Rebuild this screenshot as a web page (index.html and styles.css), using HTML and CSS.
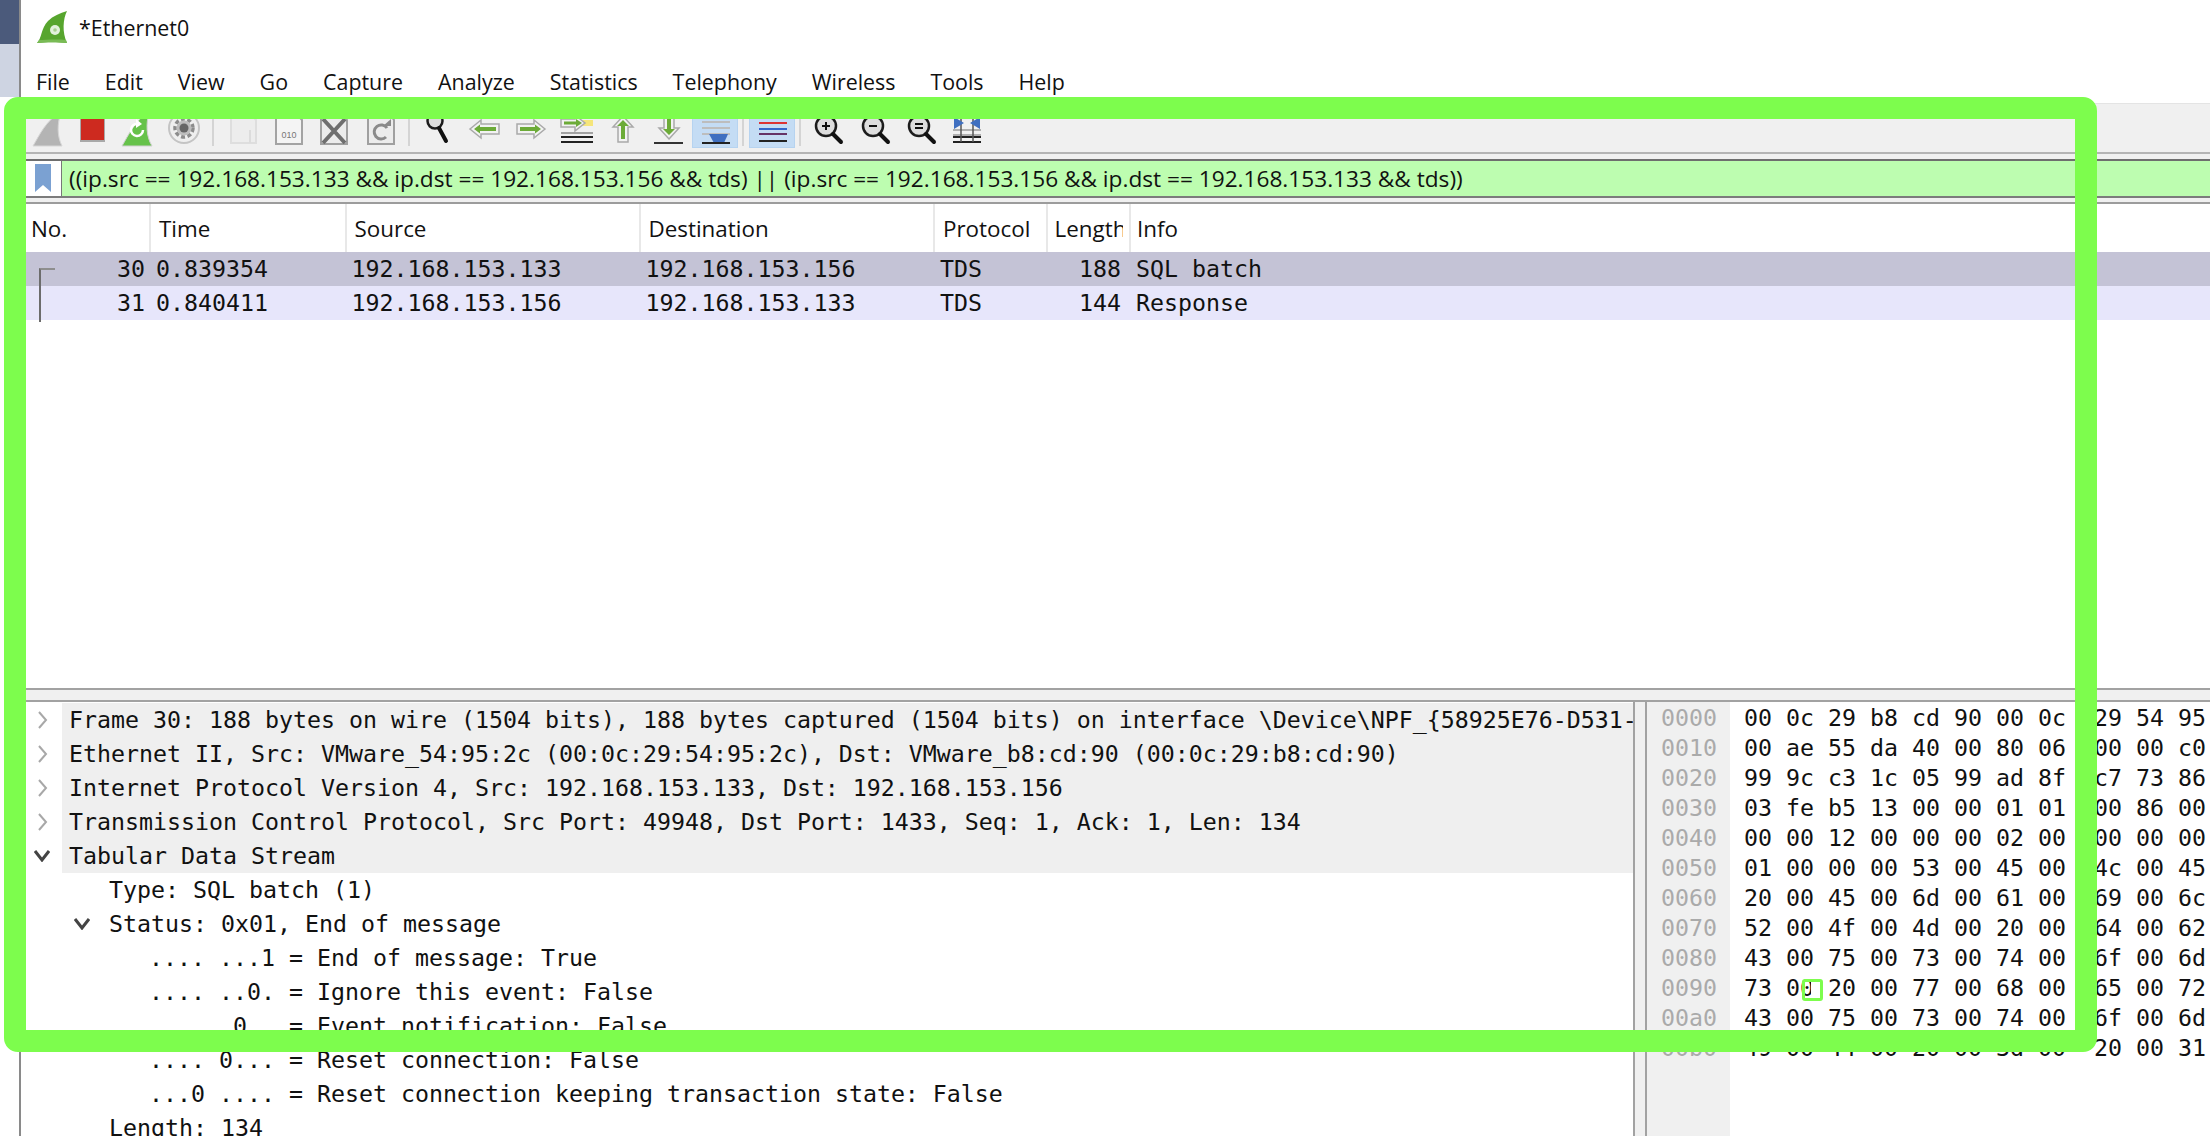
FILE: index.html
```html
<!DOCTYPE html>
<html lang="en">
<head>
<meta charset="utf-8">
<title>*Ethernet0</title>
<link rel="stylesheet" href="styles.css">
</head>
<body>
<div class="app">
  <aside class="side"><div class="side-dark"></div><div class="side-light"></div></aside>
  <main class="main">
    <header class="titlebar">
      <svg class="logo" width="32" height="34" viewBox="0 0 32 34"><path d="M1 33C6 28 5 18 12 11C17 6 24 3 31 1C27 9 26 22 31 33C22 32 10 32 1 33Z" fill="#57a52e"/><path d="M1 33C10 32 22 32 31 33L30 30C20 29 9 30 3 30Z" fill="#79bb55"/><circle cx="19" cy="20" r="5" fill="#e2f1dc"/><circle cx="19" cy="20" r="1.8" fill="#a8d090"/></svg>
      <span class="title-text">*Ethernet0</span>
    </header>
    <nav class="menubar">
      <span>File</span><span>Edit</span><span>View</span><span>Go</span><span>Capture</span><span>Analyze</span><span>Statistics</span><span>Telephony</span><span>Wireless</span><span>Tools</span><span>Help</span>
    </nav>
    <div class="toolbar">
      <div class="tool"><svg viewBox="0 0 46 46"><path d="M9 40C15 30 22 14 37 6C33 18 33 30 38 40Z" fill="#b4b4b4" stroke="#d6d6d6"/></svg></div>
      <div class="tool"><svg viewBox="0 0 46 46"><rect x="10" y="6" width="25" height="30" fill="#a9a9a9"/><rect x="11" y="6" width="23" height="28" fill="#cd2a1f"/></svg></div>
      <div class="tool"><svg viewBox="0 0 46 46"><path d="M6 40C12 30 19 14 33 6C30 18 30 30 36 40Z" fill="#66c24a" stroke="#d0d0d0"/><path d="M27 24A6 6 0 1 1 22 18" fill="none" stroke="#fff" stroke-width="2.5"/><path d="M20 13L26 18L20 22Z" fill="#fff"/></svg></div>
      <div class="tool"><svg viewBox="0 0 46 46"><circle cx="22" cy="22" r="15" fill="#efefef" stroke="#c4c4c4" stroke-width="2"/><circle cx="22" cy="22" r="9" fill="none" stroke="#8c8c8c" stroke-width="3.5" stroke-dasharray="4 2.5"/><circle cx="22" cy="22" r="7.5" fill="#bdbdbd"/><circle cx="22" cy="22" r="4.5" fill="#666"/></svg></div>
      <div class="tool-sep tool-sep-a"></div>
      <div class="tool"><svg viewBox="0 0 46 46"><path d="M11 6H29L36 14V37H11Z" fill="#ededed" stroke="#dedede" stroke-width="2"/><path d="M30 24V37" stroke="#dcdcdc" stroke-width="2"/></svg></div>
      <div class="tool"><svg viewBox="0 0 46 46"><path d="M10 6H29L36 14V38H10Z" fill="#f4f4f4" stroke="#a3a3a3" stroke-width="2"/><text x="23" y="32" class="svg-bits">010</text></svg></div>
      <div class="tool"><svg viewBox="0 0 46 46"><path d="M9 6H29L35 14V38H9Z" fill="#ececec" stroke="#a0a0a0" stroke-width="2"/><path d="M11 13L33 37M33 13L11 37" stroke="#6f6f6f" stroke-width="4"/></svg></div>
      <div class="tool"><svg viewBox="0 0 46 46"><path d="M10 6H30L36 14V38H10Z" fill="#ececec" stroke="#a0a0a0" stroke-width="2"/><path d="M29 22A7 7 0 1 0 28 31" fill="none" stroke="#8a8a8a" stroke-width="3"/><path d="M25 20H33V13Z" fill="#8a8a8a"/></svg></div>
      <div class="tool-sep tool-sep-b"></div>
      <div class="tool"><svg viewBox="0 0 46 46"><circle cx="20" cy="15" r="7.5" fill="#dcdcdc" stroke="#1c1c1c" stroke-width="2.5"/><path d="M24 22L31 35" stroke="#111" stroke-width="4" stroke-linecap="round"/></svg></div>
      <div class="tool"><svg viewBox="0 0 46 46"><path d="M9 23L20 14V18H38V28H20V32Z" fill="#f2f2f2" stroke="#a9a9a9" stroke-width="1.5"/><path d="M13 23L19 18.5V21H35V25H19V27.5Z" fill="#6cab38"/></svg></div>
      <div class="tool"><svg viewBox="0 0 46 46"><path d="M38 23L27 14V18H10V28H27V32Z" fill="#f2f2f2" stroke="#a9a9a9" stroke-width="1.5"/><path d="M34 23L28 18.5V21H13V25H28V27.5Z" fill="#6cab38"/></svg></div>
      <div class="tool"><svg viewBox="0 0 46 46"><rect x="30" y="14" width="10" height="6" fill="#f5e57a"/><path d="M32 17L22 9V13H8V21H22V25Z" fill="#f2f2f2" stroke="#a9a9a9" stroke-width="1.5"/><path d="M29 17L23 13V15.5H11V18.5H23V21Z" fill="#6cab38"/><path d="M8 27H40" stroke="#888" stroke-width="1.5"/><path d="M8 31H40M8 36H40" stroke="#222" stroke-width="2"/></svg></div>
      <div class="tool"><svg viewBox="0 0 46 46"><path d="M24 10L34 21H29V36H19V21H14Z" fill="#f2f2f2" stroke="#a9a9a9" stroke-width="1.5"/><path d="M24 14L30 20H26V33H22V20H18Z" fill="#6cab38"/></svg></div>
      <div class="tool"><svg viewBox="0 0 46 46"><path d="M24 33L34 22H29V6H19V22H14Z" fill="#f2f2f2" stroke="#a9a9a9" stroke-width="1.5"/><path d="M24 29L30 23H26V10H22V23H18Z" fill="#6cab38"/><path d="M9 37H38" stroke="#333" stroke-width="2"/></svg></div>
      <div class="tool tool-on tool-first-on"><svg viewBox="0 0 46 46"><path d="M10 16H38M10 22H38M10 28H38" stroke="#bdbdbd" stroke-width="2"/><path d="M17 28H36L32 37H22Z" fill="#3f6fc0"/><path d="M10 37H38" stroke="#222" stroke-width="2"/></svg></div>
      <div class="tool-sep tool-sep-c"></div>
      <div class="tool tool-on"><svg viewBox="0 0 46 46"><path d="M10 17H38" stroke="#d33" stroke-width="2"/><path d="M10 23H38" stroke="#36c" stroke-width="2"/><path d="M10 28H38" stroke="#636" stroke-width="2"/><path d="M10 35H38" stroke="#222" stroke-width="2"/></svg></div>
      <div class="tool-sep tool-sep-d"></div>
      <div class="tool"><svg viewBox="0 0 46 46"><circle cx="21" cy="20" r="10" fill="#dedede" stroke="#1c1c1c" stroke-width="2.5"/><path d="M17 20H25M21 16V24" stroke="#111" stroke-width="2"/><path d="M28 28L36 36" stroke="#111" stroke-width="4" stroke-linecap="round"/></svg></div>
      <div class="tool"><svg viewBox="0 0 46 46"><circle cx="22" cy="20" r="10" fill="#dedede" stroke="#1c1c1c" stroke-width="2.5"/><path d="M18 20H26" stroke="#111" stroke-width="2"/><path d="M29 28L37 36" stroke="#111" stroke-width="4" stroke-linecap="round"/></svg></div>
      <div class="tool"><svg viewBox="0 0 46 46"><circle cx="22" cy="20" r="10" fill="#dedede" stroke="#1c1c1c" stroke-width="2.5"/><path d="M18 18H26M18 22H26" stroke="#111" stroke-width="2"/><path d="M29 28L37 36" stroke="#111" stroke-width="4" stroke-linecap="round"/></svg></div>
      <div class="tool"><svg viewBox="0 0 46 46"><path d="M10 24H38M10 29H38" stroke="#999" stroke-width="1.5"/><path d="M10 31H38M10 36H38" stroke="#222" stroke-width="2"/><path d="M18 10V36M30 10V36" stroke="#555" stroke-width="1.5"/><path d="M11 11L21 17L11 23ZM37 11L27 17L37 23Z" fill="#3f6fc0"/></svg></div>
    </div>
    <div class="filter-wrap">
      <div class="filter">
        <div class="filter-mark"><svg width="18" height="29" viewBox="0 0 18 29"><path d="M1 0H17V28L9 21L1 28Z" fill="#7ba1d2"/></svg></div>
        <div class="filter-text">((ip.src == 192.168.153.133 &amp;&amp; ip.dst == 192.168.153.156 &amp;&amp; tds) || (ip.src == 192.168.153.156 &amp;&amp; ip.dst == 192.168.153.133 &amp;&amp; tds))</div>
      </div>
    </div>
    <section class="packets">
      <div class="pk-grid pk-head">
        <div>No.</div><div>Time</div><div>Source</div><div>Destination</div><div>Protocol</div><div class="pk-len"><span>Length</span></div><div class="pk-info">Info</div>
      </div>
      <div class="pk-grid pk-row pk-sel">
        <div class="num">30</div><div>0.839354</div><div>192.168.153.133</div><div>192.168.153.156</div><div>TDS</div><div class="num">188</div><div>SQL batch</div>
      </div>
      <div class="pk-grid pk-row pk-rel">
        <div class="num">31</div><div>0.840411</div><div>192.168.153.156</div><div>192.168.153.133</div><div>TDS</div><div class="num">144</div><div>Response</div>
      </div>
      <div class="pk-bracket"></div>
    </section>
    <div class="splitter"></div>
    <section class="bottom">
      <div class="tree">
        <div class="tree-row shade"><span class="twist"><svg width="12" height="18" viewBox="0 0 12 18"><path d="M3 1L10 9L3 17" class="chev"/></svg></span><span class="label">Frame 30: 188 bytes on wire (1504 bits), 188 bytes captured (1504 bits) on interface \Device\NPF_{58925E76-D531-</span></div>
        <div class="tree-row shade"><span class="twist"><svg width="12" height="18" viewBox="0 0 12 18"><path d="M3 1L10 9L3 17" class="chev"/></svg></span><span class="label">Ethernet II, Src: VMware_54:95:2c (00:0c:29:54:95:2c), Dst: VMware_b8:cd:90 (00:0c:29:b8:cd:90)</span></div>
        <div class="tree-row shade"><span class="twist"><svg width="12" height="18" viewBox="0 0 12 18"><path d="M3 1L10 9L3 17" class="chev"/></svg></span><span class="label">Internet Protocol Version 4, Src: 192.168.153.133, Dst: 192.168.153.156</span></div>
        <div class="tree-row shade"><span class="twist"><svg width="12" height="18" viewBox="0 0 12 18"><path d="M3 1L10 9L3 17" class="chev"/></svg></span><span class="label">Transmission Control Protocol, Src Port: 49948, Dst Port: 1433, Seq: 1, Ack: 1, Len: 134</span></div>
        <div class="tree-row shade"><span class="twist"><svg width="16" height="12" viewBox="0 0 16 12"><path d="M1 1L8 10L15 1" class="chev-open"/></svg></span><span class="label">Tabular Data Stream</span></div>
        <div class="tree-row l1"><span class="twist"></span><span class="label">Type: SQL batch (1)</span></div>
        <div class="tree-row l1"><span class="twist"><svg width="16" height="12" viewBox="0 0 16 12"><path d="M1 1L8 10L15 1" class="chev-open"/></svg></span><span class="label">Status: 0x01, End of message</span></div>
        <div class="tree-row l2"><span class="twist"></span><span class="label">.... ...1 = End of message: True</span></div>
        <div class="tree-row l2"><span class="twist"></span><span class="label">.... ..0. = Ignore this event: False</span></div>
        <div class="tree-row l2"><span class="twist"></span><span class="label">.... .0.. = Event notification: False</span></div>
        <div class="tree-row l2"><span class="twist"></span><span class="label">.... 0... = Reset connection: False</span></div>
        <div class="tree-row l2"><span class="twist"></span><span class="label">...0 .... = Reset connection keeping transaction state: False</span></div>
        <div class="tree-row l1"><span class="twist"></span><span class="label">Length: 134</span></div>
      </div>
      <div class="gutter"></div>
      <div class="hex">
        <div class="hex-off">0000
0010
0020
0030
0040
0050
0060
0070
0080
0090
00a0
00b0</div>
        <div class="hex-bytes">00 0c 29 b8 cd 90 00 0c  29 54 95
00 ae 55 da 40 00 80 06  00 00 c0
99 9c c3 1c 05 99 ad 8f  c7 73 86
03 fe b5 13 00 00 01 01  00 86 00
00 00 12 00 00 00 02 00  00 00 00
01 00 00 00 53 00 45 00  4c 00 45
20 00 45 00 6d 00 61 00  69 00 6c
52 00 4f 00 4d 00 20 00  64 00 62
43 00 75 00 73 00 74 00  6f 00 6d
73 00 20 00 77 00 68 00  65 00 72
43 00 75 00 73 00 74 00  6f 00 6d
49 00 44 00 20 00 3d 00  20 00 31</div>
      </div>
    </section>
  </main>
</div>
<div class="hl-frame"></div>
<div class="hl-cursor"></div>
</body>
</html>
```
FILE: styles.css
```css
* { box-sizing: border-box; }
html, body { margin: 0; height: 100%; overflow: hidden; background: #fff; }
body { font-family: "Open Sans", "Liberation Sans", sans-serif; font-size: 20px; color: #111; }
.app { display: flex; width: 2210px; height: 1136px; position: relative; }

.side { width: 21px; flex: none; border-right: 2px solid #8a8a8a; }
.side-dark { height: 44px; background: #4b5a7b; }
.side-light { height: 53px; background: #ced4e2; }

.main { flex: 1; min-width: 0; display: flex; flex-direction: column; }

.titlebar { height: 54px; margin-bottom: 2px; display: flex; align-items: center; padding-left: 15px; gap: 11px; }
.logo { flex: none; margin-top: -1px; }
.title-text { font-size: 21.4px; }

.menubar { height: 47px; display: flex; align-items: center; gap: 35px; padding: 4px 0 0 15px; font-size: 21.4px; }

.toolbar { height: 49px; flex: none; display: flex; align-items: flex-start; padding: 2px 0 0 3px; background: #f0f0f0; border-top: 1px solid #e4e4e4; }
.tool { width: 46px; height: 46px; flex: none; }
.tool svg { display: block; width: 46px; height: 46px; }
.tool-on { background: #c4dcf4; border: 1px solid #b6d3f0; height: 42px; }
.tool-on svg { margin: -1px; }
.tool-first-on { margin-left: 1px; }
.tool-sep { width: 2px; height: 32px; margin-top: 8px; background: #d4d4d4; flex: none; }
.tool-sep-a { margin-left: 4px; margin-right: 6px; }
.tool-sep-b { margin-left: 4px; margin-right: 5px; }
.tool-sep-c { margin-left: 4px; margin-right: 5px; }
.tool-sep-d { margin-left: 4px; margin-right: 4px; }
.svg-bits { font-family: "Liberation Sans", sans-serif; font-size: 9px; fill: #777; text-anchor: middle; }

.filter-wrap { flex: none; height: 52px; background: #f0f0f0; border-top: 2px solid #b4b4b4; border-bottom: 2px solid #9c9c9c; padding-top: 5px; }
.filter { height: 39px; display: flex; border-top: 2px solid #6e6e6e; border-bottom: 2px solid #7c7c7c; }
.filter-mark { width: 41px; flex: none; background: #fff; border-right: 1px solid #777; display: flex; align-items: center; padding-left: 13px; }
.filter-text { flex: 1; padding-left: 7px; line-height: 35px; font-size: 22.65px; background: #bdfdb0; white-space: nowrap; overflow: hidden; }

.packets { flex: none; height: 484px; position: relative; }
.pk-grid { display: grid; grid-template-columns: 128px 195.5px 294px 294.5px 112.5px 83.5px 1fr; }
.pk-head { height: 48px; align-items: stretch; font-size: 22.4px; }
.pk-head > div { padding-left: 8px; line-height: 50px; overflow: hidden; white-space: nowrap; border-left: 2px solid #e8e8e8; }
.pk-head > div:first-child { border-left: 0; padding-left: 10px; }
.pk-head > .pk-len { padding-left: 7px; }
.pk-len span { display: block; width: 68px; overflow: hidden; }
.pk-head > .pk-info { padding-left: 6px; }
.pk-row { height: 34px; font-family: "DejaVu Sans Mono", monospace; font-size: 23.25px; line-height: 34px; white-space: pre; }
.pk-row > div { padding-left: 7px; overflow: hidden; }
.pk-row > .num { padding: 0 4px 0 0; text-align: right; }
.pk-row > div:nth-child(6) { padding-right: 8px; }
.pk-sel { background: #c4c3d6; }
.pk-rel { background: #e7e6fb; }
.pk-bracket { position: absolute; left: 18px; top: 64px; width: 16px; height: 54px; border-left: 2px solid #6c6c6c; border-top: 2px solid #8e8e8e; }

.splitter { flex: none; height: 14px; background: #f0f0f0; border-top: 2px solid #a2a2a2; border-bottom: 2px solid #a2a2a2; }

.bottom { flex: 1; min-height: 0; display: flex; font-family: "DejaVu Sans Mono", monospace; font-size: 23.25px; }
.tree { width: 1614px; flex: none; border-right: 2px solid #a2a2a2; overflow: hidden; padding-top: 1px; }
.tree-row { display: flex; height: 34px; line-height: 34px; white-space: pre; }
.twist { width: 41px; flex: none; display: flex; align-items: center; justify-content: center; }
.label { flex: 1; min-width: 0; padding-left: 7px; overflow: hidden; }
.shade .label { background: #efefef; }
.l1 { padding-left: 40px; }
.l2 { padding-left: 80px; }
.chev { fill: none; stroke: #a8a8a8; stroke-width: 2; }
.chev-open { fill: none; stroke: #444; stroke-width: 3; }

.gutter { width: 10px; flex: none; background: #f0f0f0; }
.hex { flex: 1; min-width: 0; display: flex; border-left: 2px solid #a2a2a2; overflow: hidden; line-height: 30px; white-space: pre; }
.hex-off { width: 83px; flex: none; background: #f0f0f0; color: #aaa; padding: 1px 0 0 14px; }
.hex-bytes { flex: 1; padding: 1px 0 0 14px; }

.hl-frame { position: absolute; left: 4px; top: 97px; width: 2093px; height: 955px; border: 22px solid #7dfd4d; border-radius: 14px; pointer-events: none; }
.hl-cursor { position: absolute; left: 1802px; top: 979px; width: 21px; height: 22px; border: 3px solid #7dfd4d; border-radius: 3px; pointer-events: none; background: linear-gradient(90deg, transparent 40%, #fff 40%); }
```
